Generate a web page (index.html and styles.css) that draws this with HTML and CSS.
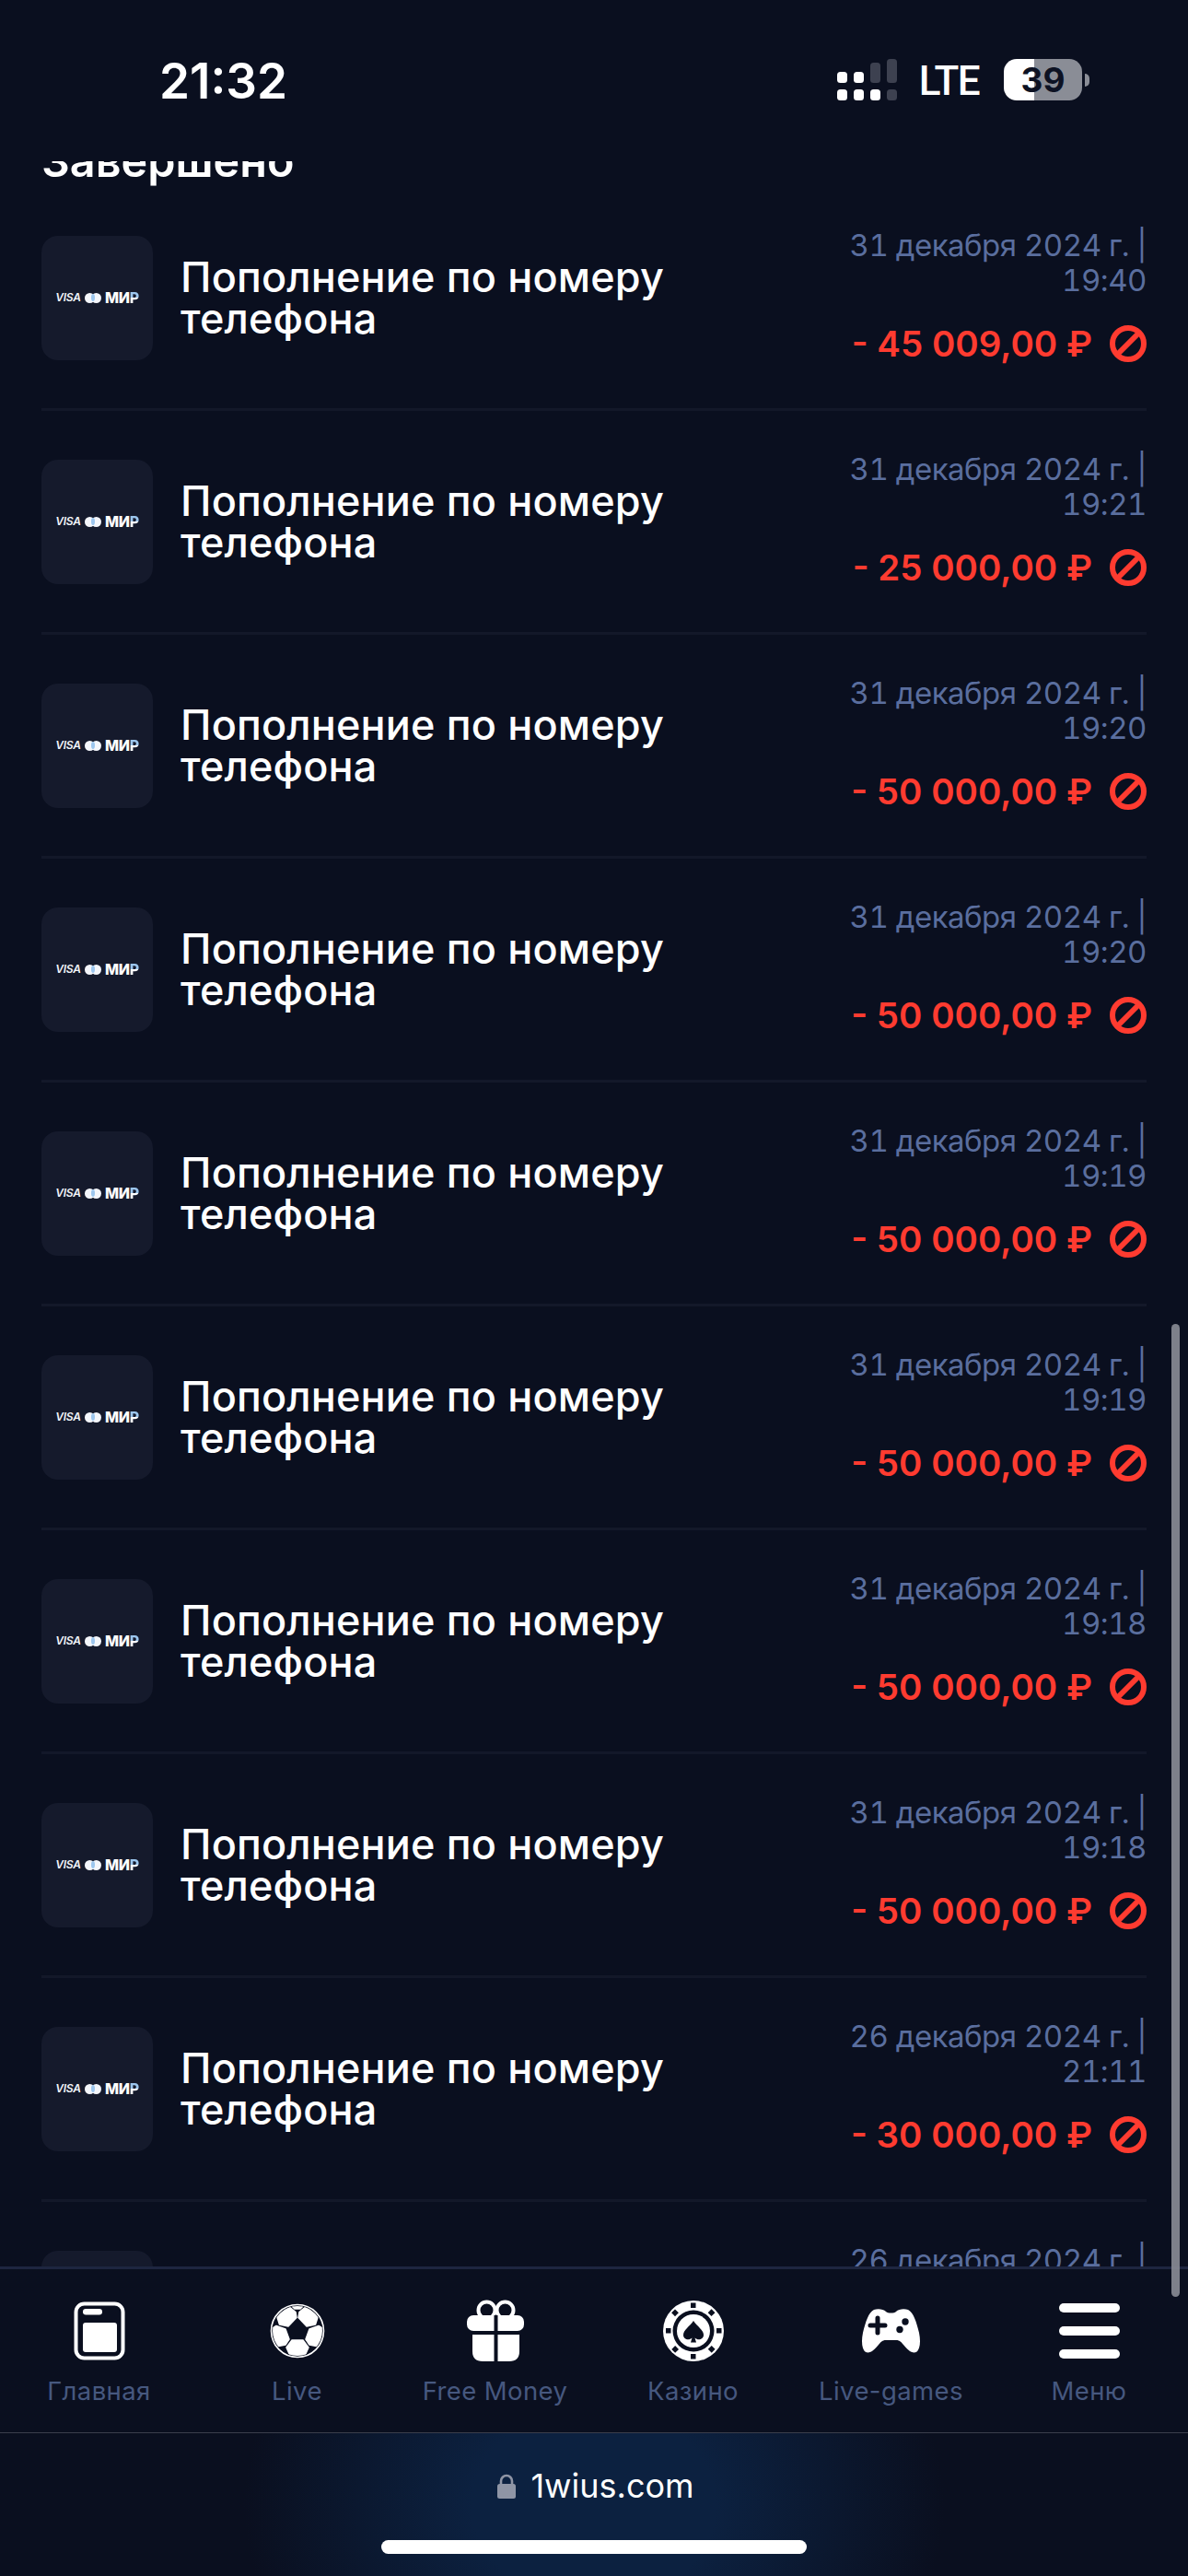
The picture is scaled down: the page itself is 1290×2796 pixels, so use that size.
FILE: index.html
```html
<!DOCTYPE html>
<html lang="ru">
<head>
<meta charset="utf-8">
<title>История</title>
<link rel="stylesheet" href="styles.css">
</head>
<body>
<div class="app">
  <header class="status">
    <span class="time">21:32</span>
    <div class="status-right">
      <svg class="signal" viewBox="0 0 65 45" width="65" height="45">
        <g fill="#fff"><rect x="0" y="14" width="11" height="12" rx="3.5"/><rect x="18" y="14" width="11" height="12" rx="3.5"/><rect x="0" y="33" width="11" height="12" rx="3.5"/><rect x="18" y="33" width="11" height="12" rx="3.5"/><rect x="36" y="33" width="11" height="12" rx="3.5"/></g>
        <g fill="#3d4150"><rect x="36" y="4" width="11" height="22" rx="3.5"/><rect x="54" y="0" width="11" height="26" rx="3.5"/><rect x="54" y="33" width="11" height="12" rx="3.5"/></g>
      </svg>
      <span class="lte">LTE</span>
      <div class="battery"><span class="battery-num">39</span></div>
      <span class="battery-nub"></span>
    </div>
  </header>

  <main class="content">
    <h2 class="heading">Завершено</h2>
    <ul class="list">
      <li class="row">
        <div class="thumb"><span class="visa">VISA</span><span class="mc"><i></i><i></i></span><span class="mir">МИ<b>Р</b></span></div>
        <div class="title">Пополнение по номеру телефона</div>
        <div class="side"><div class="date">31 декабря 2024 г. | 19:40</div><div class="amount"><span>- 45 009,00 ₽</span><svg class="ban" viewBox="0 0 40 40"><circle cx="20" cy="20" r="17" /><path d="M8 32 32 8"/></svg></div></div>
      </li>
      <li class="row">
        <div class="thumb"><span class="visa">VISA</span><span class="mc"><i></i><i></i></span><span class="mir">МИ<b>Р</b></span></div>
        <div class="title">Пополнение по номеру телефона</div>
        <div class="side"><div class="date">31 декабря 2024 г. | 19:21</div><div class="amount"><span>- 25 000,00 ₽</span><svg class="ban" viewBox="0 0 40 40"><circle cx="20" cy="20" r="17" /><path d="M8 32 32 8"/></svg></div></div>
      </li>
      <li class="row">
        <div class="thumb"><span class="visa">VISA</span><span class="mc"><i></i><i></i></span><span class="mir">МИ<b>Р</b></span></div>
        <div class="title">Пополнение по номеру телефона</div>
        <div class="side"><div class="date">31 декабря 2024 г. | 19:20</div><div class="amount"><span>- 50 000,00 ₽</span><svg class="ban" viewBox="0 0 40 40"><circle cx="20" cy="20" r="17" /><path d="M8 32 32 8"/></svg></div></div>
      </li>
      <li class="row">
        <div class="thumb"><span class="visa">VISA</span><span class="mc"><i></i><i></i></span><span class="mir">МИ<b>Р</b></span></div>
        <div class="title">Пополнение по номеру телефона</div>
        <div class="side"><div class="date">31 декабря 2024 г. | 19:20</div><div class="amount"><span>- 50 000,00 ₽</span><svg class="ban" viewBox="0 0 40 40"><circle cx="20" cy="20" r="17" /><path d="M8 32 32 8"/></svg></div></div>
      </li>
      <li class="row">
        <div class="thumb"><span class="visa">VISA</span><span class="mc"><i></i><i></i></span><span class="mir">МИ<b>Р</b></span></div>
        <div class="title">Пополнение по номеру телефона</div>
        <div class="side"><div class="date">31 декабря 2024 г. | 19:19</div><div class="amount"><span>- 50 000,00 ₽</span><svg class="ban" viewBox="0 0 40 40"><circle cx="20" cy="20" r="17" /><path d="M8 32 32 8"/></svg></div></div>
      </li>
      <li class="row">
        <div class="thumb"><span class="visa">VISA</span><span class="mc"><i></i><i></i></span><span class="mir">МИ<b>Р</b></span></div>
        <div class="title">Пополнение по номеру телефона</div>
        <div class="side"><div class="date">31 декабря 2024 г. | 19:19</div><div class="amount"><span>- 50 000,00 ₽</span><svg class="ban" viewBox="0 0 40 40"><circle cx="20" cy="20" r="17" /><path d="M8 32 32 8"/></svg></div></div>
      </li>
      <li class="row">
        <div class="thumb"><span class="visa">VISA</span><span class="mc"><i></i><i></i></span><span class="mir">МИ<b>Р</b></span></div>
        <div class="title">Пополнение по номеру телефона</div>
        <div class="side"><div class="date">31 декабря 2024 г. | 19:18</div><div class="amount"><span>- 50 000,00 ₽</span><svg class="ban" viewBox="0 0 40 40"><circle cx="20" cy="20" r="17" /><path d="M8 32 32 8"/></svg></div></div>
      </li>
      <li class="row">
        <div class="thumb"><span class="visa">VISA</span><span class="mc"><i></i><i></i></span><span class="mir">МИ<b>Р</b></span></div>
        <div class="title">Пополнение по номеру телефона</div>
        <div class="side"><div class="date">31 декабря 2024 г. | 19:18</div><div class="amount"><span>- 50 000,00 ₽</span><svg class="ban" viewBox="0 0 40 40"><circle cx="20" cy="20" r="17" /><path d="M8 32 32 8"/></svg></div></div>
      </li>
      <li class="row">
        <div class="thumb"><span class="visa">VISA</span><span class="mc"><i></i><i></i></span><span class="mir">МИ<b>Р</b></span></div>
        <div class="title">Пополнение по номеру телефона</div>
        <div class="side"><div class="date">26 декабря 2024 г. | 21:11</div><div class="amount"><span>- 30 000,00 ₽</span><svg class="ban" viewBox="0 0 40 40"><circle cx="20" cy="20" r="17" /><path d="M8 32 32 8"/></svg></div></div>
      </li>
      <li class="row">
        <div class="thumb"><span class="visa">VISA</span><span class="mc"><i></i><i></i></span><span class="mir">МИ<b>Р</b></span></div>
        <div class="title">Пополнение по номеру телефона</div>
        <div class="side"><div class="date">26 декабря 2024 г. | 21:10</div><div class="amount"><span>- 30 000,00 ₽</span><svg class="ban" viewBox="0 0 40 40"><circle cx="20" cy="20" r="17" /><path d="M8 32 32 8"/></svg></div></div>
      </li>
    </ul>
  </main>

  <nav class="tabs">
    <a class="tab">
      <span class="tab-icon"><svg viewBox="0 0 56 64" width="56" height="64"><rect x="2.5" y="2.5" width="51" height="59" rx="9" fill="none" stroke="#fff" stroke-width="4"/><rect x="10" y="8" width="21" height="6.5" rx="3.2" fill="#fff"/><rect x="10" y="23" width="37" height="32" rx="3" fill="#fff"/></svg></span>
      <span class="tab-label">Главная</span>
    </a>
    <a class="tab">
      <span class="tab-icon"><svg viewBox="0 0 60 60" width="60" height="60"><defs><clipPath id="ball"><circle cx="30" cy="30" r="27"/></clipPath></defs><circle cx="30" cy="30" r="28.5" fill="none" stroke="#fff" stroke-width="1.6"/><g fill="#fff" stroke="#fff" stroke-width="1.5" stroke-linejoin="round" clip-path="url(#ball)"><path d="M20 3 28 9.5 29 15.5 20 25 10.5 23 7 12Z"/><path d="M40 3 32 9.5 31 15.5 40 25 49.5 23 53 12Z"/><path d="M1 28 7 24.5 17 28 21 39 17 45 7 47 1 40Z"/><path d="M59 28 53 24.5 43 28 39 39 43 45 53 47 59 40Z"/><path d="M24 40H36L42 48 37 59H23L18 48Z"/><path d="M22 1H38L33 6H27Z"/></g></svg></span>
      <span class="tab-label">Live</span>
    </a>
    <a class="tab">
      <span class="tab-icon"><svg viewBox="0 0 62 67" width="62" height="67"><g fill="none" stroke="#fff" stroke-width="4"><circle cx="21.5" cy="11.5" r="9"/><circle cx="41.5" cy="11.5" r="9"/></g><rect x="0" y="17" width="62" height="17" rx="7" fill="#fff"/><path d="M6 38H57V56Q57 67 46 67H17Q6 67 6 56Z" fill="#fff"/><rect x="29.5" y="17" width="4" height="50" fill="#0a0f1f"/></svg></span>
      <span class="tab-label">Free Money</span>
    </a>
    <a class="tab">
      <span class="tab-icon"><svg viewBox="0 0 66 66" width="66" height="66"><circle cx="33" cy="33" r="33" fill="#fff"/><circle cx="33" cy="33" r="22.5" fill="#0a0f1f"/><circle cx="33" cy="33" r="18" fill="#fff"/><g fill="#0a0f1f"><rect x="30" y="2.500" width="5.500" height="5.500"/><rect x="30" y="58" width="5.500" height="5.500"/><rect x="3" y="30" width="5.500" height="5.500"/><rect x="58" y="30" width="5.500" height="5.500"/><rect x="10.500" y="10.500" width="5.500" height="5.500" transform="rotate(45 13 13)"/><rect x="50" y="10.500" width="5.500" height="5.500" transform="rotate(45 52.700 13)"/><rect x="10.500" y="50" width="5.500" height="5.500" transform="rotate(45 13 52.700)"/><rect x="50" y="50" width="5.500" height="5.500" transform="rotate(45 52.700 52.700)"/><path d="M33 22C37 28 44 32 44 37.500 44 42 38 44 34.500 40.500L36 45.500H30L31.500 40.500C28 44 22 42 22 37.500 22 32 29 28 33 22Z"/></g></svg></span>
      <span class="tab-label">Казино</span>
    </a>
    <a class="tab">
      <span class="tab-icon"><svg viewBox="0 0 65 48" width="65" height="48"><path d="M14 1C18-.5 24 0 27 3 29 5 36 5 38 3 41 0 47-.5 51 1 57 4 60 14 63 26 65 36 64 44 60 47 55 49 50 44 46 39 43 35 41 34 38 34H27C24 34 22 35 19 39 15 44 10 49 5 47 1 44 0 36 2 26 5 14 8 4 14 1Z" fill="#fff"/><path d="M18 10V26M10 18H26" stroke="#0a0f1f" stroke-width="5" stroke-linecap="round"/><circle cx="48" cy="14" r="3.700" fill="#0a0f1f"/><circle cx="42" cy="22.500" r="3.700" fill="#0a0f1f"/></svg></span>
      <span class="tab-label">Live-games</span>
    </a>
    <a class="tab">
      <span class="tab-icon"><svg viewBox="0 0 66 60" width="66" height="60"><rect y="0" width="66" height="10" rx="5" fill="#fff"/><rect y="25" width="66" height="10" rx="5" fill="#fff"/><rect y="50" width="66" height="10" rx="5" fill="#fff"/></svg></span>
      <span class="tab-label">Меню</span>
    </a>
  </nav>

  <footer class="urlbar">
    <div class="url"><svg class="lock" viewBox="0 0 20 27" width="20" height="27"><path d="M4 13V8a6 6 0 0 1 12 0v5" fill="none" stroke="#8f95a5" stroke-width="2.600"/><rect y="11" width="20" height="16" rx="2.500" fill="#8f95a5"/></svg><span>1wius.com</span></div>
    <div class="home-bar"></div>
  </footer>

  <div class="scrollbar"></div>
</div>
</body>
</html>
```

FILE: styles.css
```css
* { box-sizing: border-box; }
html, body { margin: 0; padding: 0; }
body { background: #0a0f1f; color: #fff; font-family: Inter, "Noto Sans", sans-serif; }
.app { position: relative; width: 1290px; height: 2796px; display: flex; flex-direction: column; overflow: hidden; background: #0a0f1f; }

.status { flex: 0 0 175px; display: flex; justify-content: space-between; align-items: flex-start; padding: 60px 107px 0 173px; }
.time { font-size: 53px; line-height: 56px; font-weight: 600; letter-spacing: 0; }
.status-right { display: flex; align-items: center; margin-top: 4px; height: 45px; }
.signal { display: block; }
.lte { font-family: Roboto, sans-serif; font-size: 44px; font-weight: 500; line-height: 45px; margin: 4px 27px 0 24px; letter-spacing: -1.6px; }
.battery { width: 85px; height: 45px; border-radius: 14px; background: linear-gradient(90deg, #fff 0 33px, #8a8d96 33px); display: flex; align-items: center; justify-content: center; }
.battery-num { color: #0d1223; font-size: 37px; font-weight: 700; line-height: 45px; }
.battery-nub { width: 5px; height: 14px; margin-left: 3px; border-radius: 0 7px 7px 0; background: #8a8d96; }

.content { flex: 1 1 0; min-height: 0; overflow: hidden; padding: 0 45px; }
.heading { margin: -28px 0 0; height: 56px; font-size: 48.5px; line-height: 56px; font-weight: 600; }
.list { list-style: none; margin: 0; padding: 0; }
.row { height: 243px; padding: 46px 0; border-bottom: 3px solid #131829; display: flex; align-items: center; }
.thumb { flex: 0 0 121px; height: 135px; border-radius: 18px; background: #151a2c; display: flex; align-items: center; justify-content: center; gap: 4px; }
.visa { font-size: 12px; font-weight: 600; font-style: italic; line-height: 12px; color: #f2f5fa; letter-spacing: -.2px; }
.mc { position: relative; display: flex; }
.mc i { display: block; width: 11px; height: 11px; border-radius: 50%; background: #f4f6fb; }
.mc i + i { margin-left: -4px; }
.mc::after { content: ""; position: absolute; left: 7px; top: 1.5px; width: 4px; height: 8px; border-radius: 50%; background: #9cc6ee; }
.mir { font-size: 16px; font-weight: 800; line-height: 12px; color: #fff; letter-spacing: -.3px; }
.mir b { font-weight: 800; background: linear-gradient(180deg, #9cc6ee 0 50%, #fff 50%); -webkit-background-clip: text; background-clip: text; color: transparent; }
.title { flex: 0 0 550px; margin-left: 30px; font-size: 45px; line-height: 45px; font-weight: 500; letter-spacing: .15px; }
.side { margin-left: auto; width: 400px; height: 148px; display: flex; flex-direction: column; justify-content: space-between; align-items: flex-end; }
.date { width: 340px; margin-top: -2px; text-align: right; font-size: 33px; line-height: 38px; color: #5a6e9e; font-feature-settings: "tnum"; letter-spacing: -.5px; }
.amount { height: 48px; display: flex; align-items: center; gap: 19px; font-size: 38.5px; line-height: 48px; font-weight: 600; color: #ff3b30; }
.ban { display: block; width: 40px; height: 40px; fill: none; stroke: #ff3b30; stroke-width: 6; }

.tabs { flex: 0 0 180px; border-top: 3px solid #1e2640; background: #0a0f1f; display: grid; grid-template-columns: repeat(6, 1fr); padding-top: 33px; }
.tab { display: flex; flex-direction: column; align-items: center; }
.tab-icon { height: 67px; display: flex; align-items: center; justify-content: center; }
.tab-icon svg { display: block; }
.tab-label { margin-top: 15px; font-size: 27.5px; line-height: 34px; color: #46587f; letter-spacing: .4px; white-space: nowrap; }

.urlbar { flex: 0 0 156px; border-top: 1px solid #3a3e4b; background: radial-gradient(ellipse 380px 300px at 50% 50%, #0c2140 0, #0c2140 35%, #0a0f1f 100%); display: flex; flex-direction: column; align-items: center; padding-top: 32px; }
.url { display: flex; align-items: center; gap: 16px; height: 50px; padding-left: 4px; font-size: 36px; line-height: 50px; color: #fff; }
.lock { display: block; }
.home-bar { width: 462px; height: 15px; border-radius: 8px; background: #fff; margin-top: 34px; }

.scrollbar { position: absolute; left: 1272px; top: 1437px; width: 9px; height: 1056px; border-radius: 5px; background: #8a8d96; opacity: .9; }
```
